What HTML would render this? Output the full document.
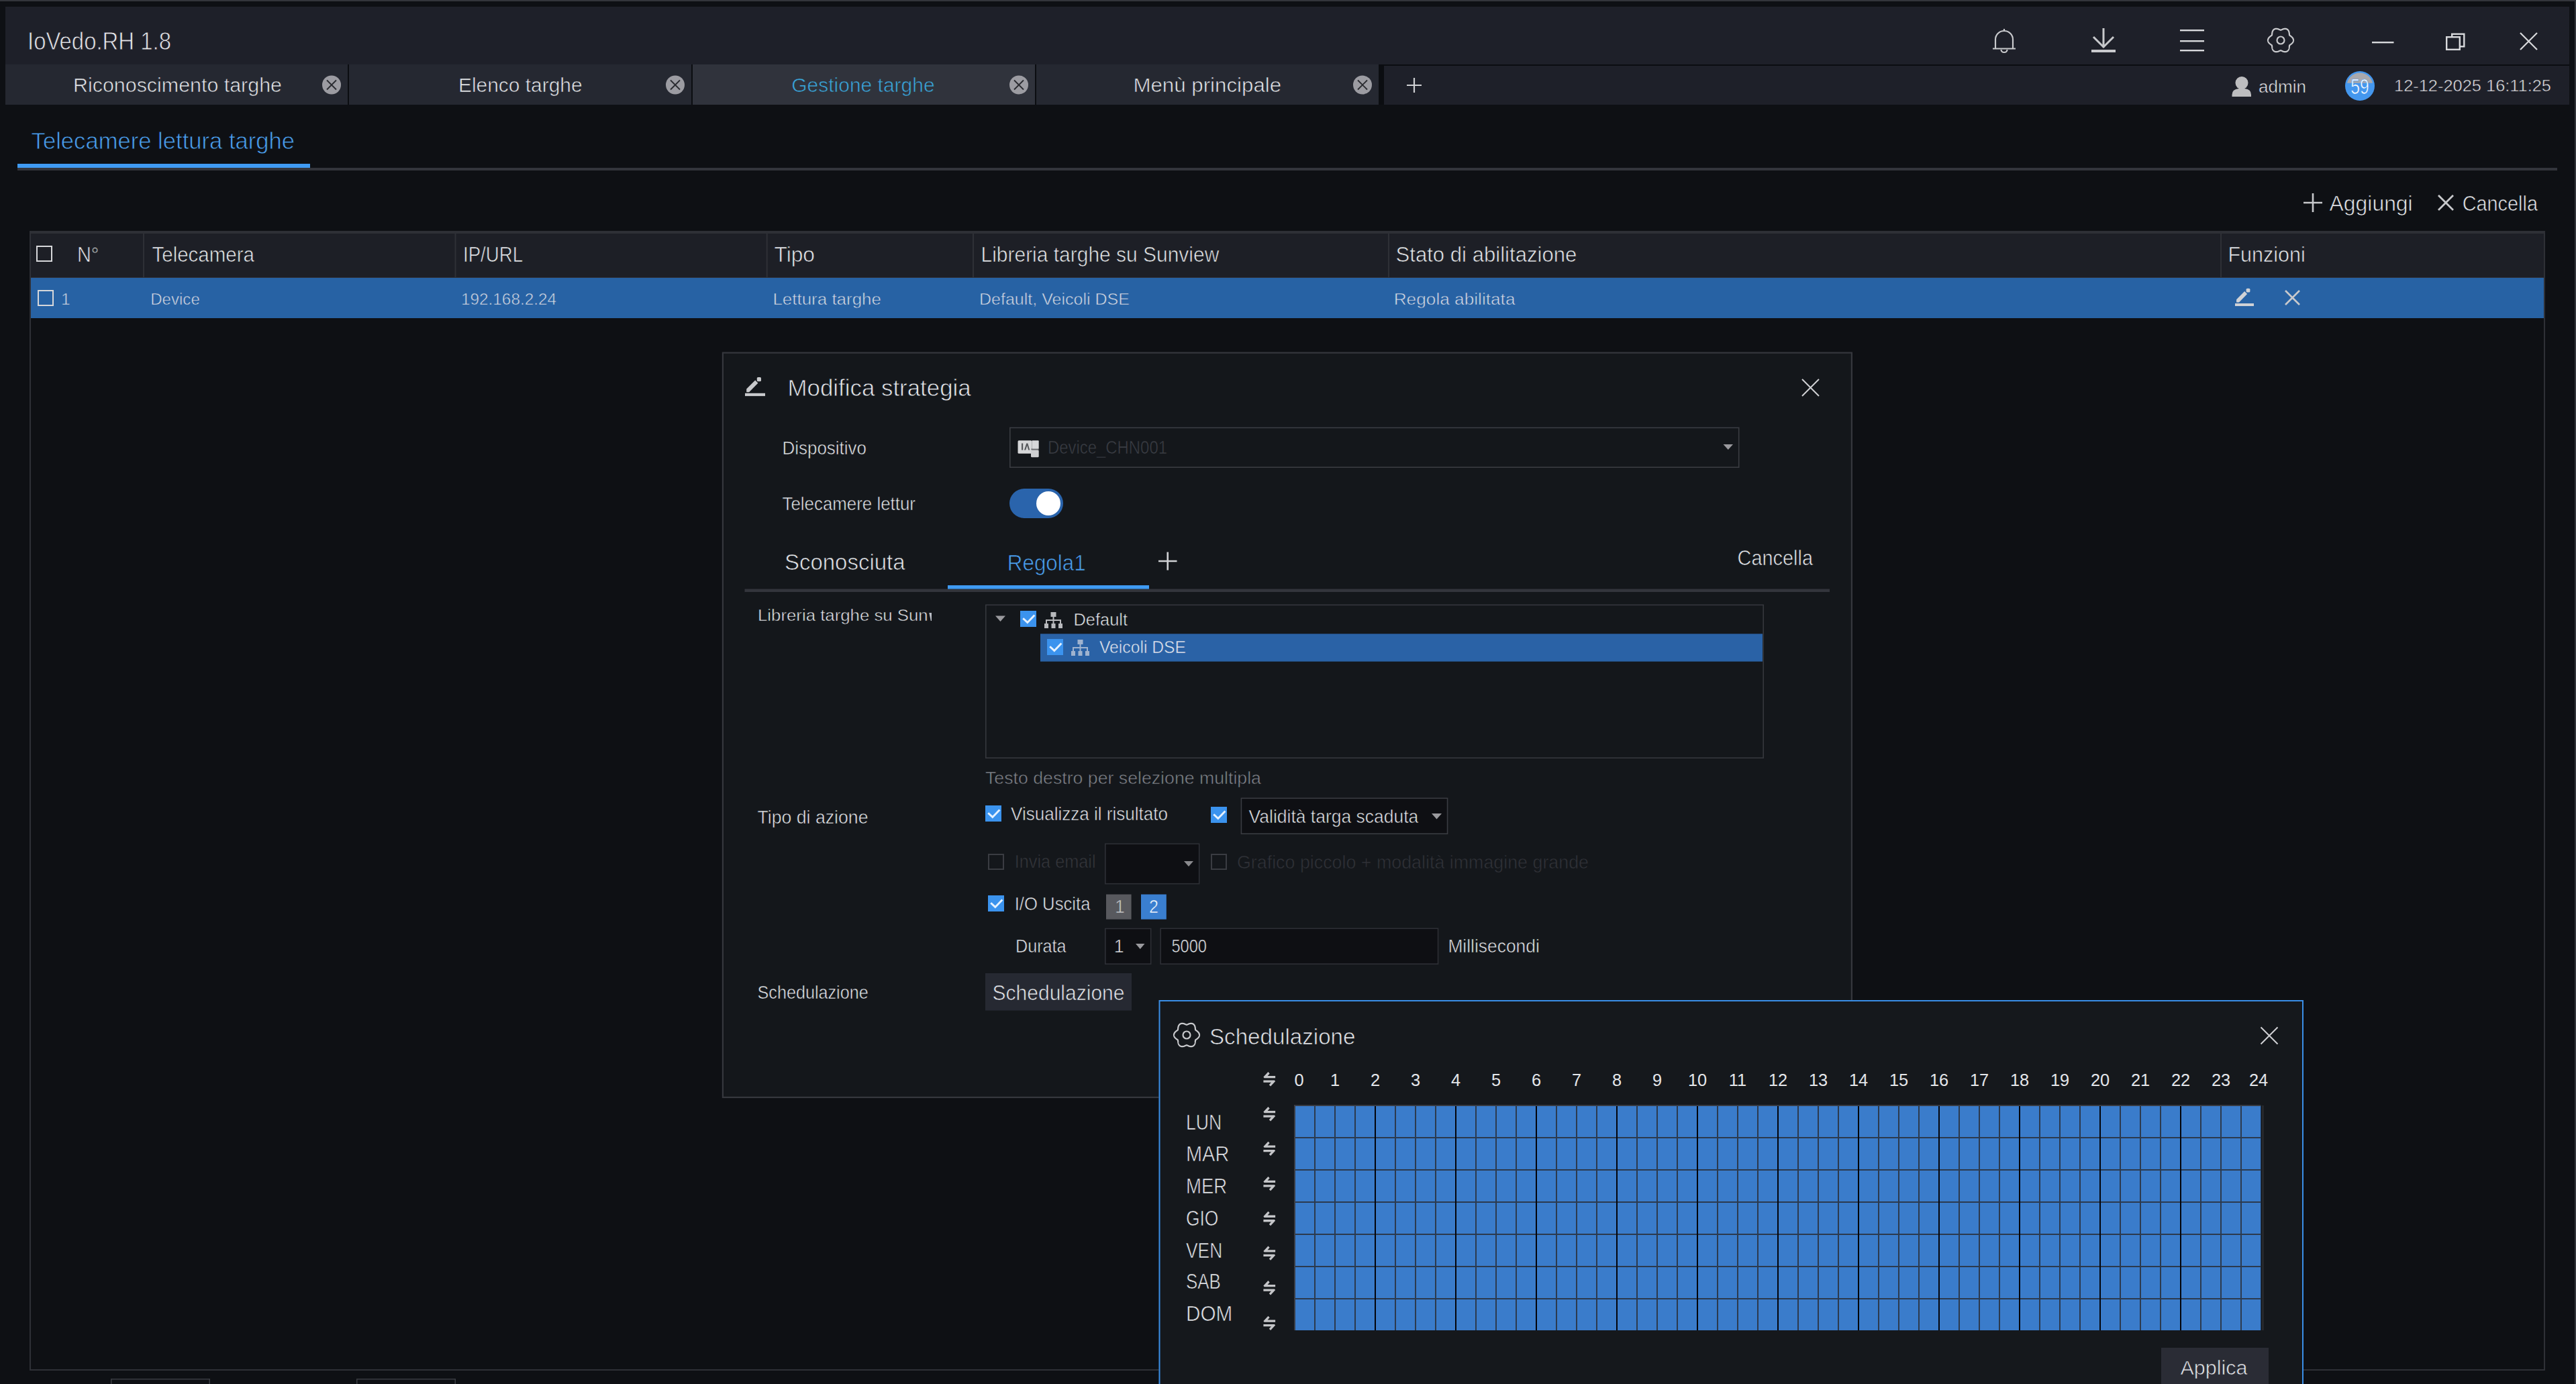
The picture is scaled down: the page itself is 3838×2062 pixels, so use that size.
<!DOCTYPE html>
<html><head><meta charset="utf-8"><title>IoVedo.RH</title>
<style>
html,body{margin:0;padding:0;background:#0e1014;overflow:hidden;}
svg{display:block;}
text{font-family:"Liberation Sans",sans-serif;white-space:pre;}
</style></head><body>
<svg width="3838" height="2062" viewBox="0 0 3838 2062">
<rect x="0.00" y="0.00" width="3838.00" height="2062.00" fill="#0e1014" />
<rect x="0.00" y="0.00" width="3838.00" height="2.00" fill="#33353b" />
<rect x="3836.00" y="0.00" width="2.00" height="2062.00" fill="#33353b" />
<rect x="8.00" y="10.00" width="3820.00" height="86.00" fill="#1e2029" />
<text x="41.00" y="74.00" font-size="36.66" fill="#e4e6ea" textLength="214.01" lengthAdjust="spacingAndGlyphs" stroke="#1e2029" stroke-width="0.81" >IoVedo.RH 1.8</text>
<path d="M2986 43 v3 M2973 72 v-13 a13 13 0 0 1 26 0 v13 M2969 72.5 h34 M2981.5 74 a4.5 4 0 0 0 9 0" fill="none" stroke="#c8c9cc" stroke-width="2.2" />
<path d="M3134 42 v29 M3119 55 l15 15 l15 -15" fill="none" stroke="#c8c9cc" stroke-width="3" />
<rect x="3116.00" y="74.00" width="36.00" height="4.00" fill="#c8c9cc" />
<rect x="3248.00" y="44.00" width="36.00" height="2.40" fill="#d8d9dc" />
<rect x="3248.00" y="60.00" width="36.00" height="2.40" fill="#d8d9dc" />
<rect x="3248.00" y="74.00" width="36.00" height="2.40" fill="#d8d9dc" />
<path d="M3417.00 60.00 L3416.99 60.33 L3416.96 60.66 L3416.91 60.99 L3416.84 61.32 L3416.75 61.64 L3416.64 61.96 L3416.51 62.27 L3416.37 62.58 L3416.21 62.88 L3416.03 63.18 L3415.84 63.47 L3415.63 63.75 L3415.41 64.02 L3415.18 64.28 L3414.94 64.54 L3414.69 64.79 L3414.44 65.03 L3414.17 65.26 L3413.91 65.48 L3413.64 65.69 L3413.36 65.90 L3413.09 66.10 L3412.82 66.29 L3412.56 66.48 L3412.29 66.67 L3412.04 66.85 L3411.80 67.03 L3411.56 67.21 L3411.35 67.40 L3411.16 67.60 L3411.08 67.86 L3411.03 68.14 L3410.99 68.43 L3410.95 68.74 L3410.92 69.05 L3410.89 69.37 L3410.86 69.69 L3410.83 70.02 L3410.79 70.36 L3410.75 70.70 L3410.70 71.04 L3410.64 71.38 L3410.57 71.72 L3410.49 72.06 L3410.40 72.40 L3410.30 72.74 L3410.19 73.07 L3410.06 73.39 L3409.92 73.71 L3409.77 74.02 L3409.60 74.33 L3409.42 74.62 L3409.22 74.90 L3409.02 75.16 L3408.79 75.42 L3408.56 75.66 L3408.31 75.88 L3408.05 76.09 L3407.78 76.28 L3407.50 76.45 L3407.21 76.61 L3406.91 76.75 L3406.60 76.87 L3406.28 76.97 L3405.95 77.06 L3405.62 77.12 L3405.29 77.17 L3404.95 77.20 L3404.61 77.21 L3404.26 77.20 L3403.92 77.18 L3403.57 77.14 L3403.22 77.09 L3402.88 77.02 L3402.54 76.94 L3402.20 76.85 L3401.87 76.75 L3401.54 76.63 L3401.21 76.51 L3400.89 76.39 L3400.57 76.26 L3400.27 76.12 L3399.96 75.98 L3399.67 75.85 L3399.37 75.71 L3399.09 75.58 L3398.81 75.46 L3398.54 75.35 L3398.27 75.26 L3398.00 75.20 L3397.73 75.26 L3397.46 75.35 L3397.19 75.46 L3396.91 75.58 L3396.63 75.71 L3396.33 75.85 L3396.04 75.98 L3395.73 76.12 L3395.43 76.26 L3395.11 76.39 L3394.79 76.51 L3394.46 76.63 L3394.13 76.75 L3393.80 76.85 L3393.46 76.94 L3393.12 77.02 L3392.78 77.09 L3392.43 77.14 L3392.08 77.18 L3391.74 77.20 L3391.39 77.21 L3391.05 77.20 L3390.71 77.17 L3390.38 77.12 L3390.05 77.06 L3389.72 76.97 L3389.40 76.87 L3389.09 76.75 L3388.79 76.61 L3388.50 76.45 L3388.22 76.28 L3387.95 76.09 L3387.69 75.88 L3387.44 75.66 L3387.21 75.42 L3386.98 75.16 L3386.78 74.90 L3386.58 74.62 L3386.40 74.33 L3386.23 74.02 L3386.08 73.71 L3385.94 73.39 L3385.81 73.07 L3385.70 72.74 L3385.60 72.40 L3385.51 72.06 L3385.43 71.72 L3385.36 71.38 L3385.30 71.04 L3385.25 70.70 L3385.21 70.36 L3385.17 70.02 L3385.14 69.69 L3385.11 69.37 L3385.08 69.05 L3385.05 68.74 L3385.01 68.43 L3384.97 68.14 L3384.92 67.86 L3384.84 67.60 L3384.65 67.40 L3384.44 67.21 L3384.20 67.03 L3383.96 66.85 L3383.71 66.67 L3383.44 66.48 L3383.18 66.29 L3382.91 66.10 L3382.64 65.90 L3382.36 65.69 L3382.09 65.48 L3381.83 65.26 L3381.56 65.03 L3381.31 64.79 L3381.06 64.54 L3380.82 64.28 L3380.59 64.02 L3380.37 63.75 L3380.16 63.47 L3379.97 63.18 L3379.79 62.88 L3379.63 62.58 L3379.49 62.27 L3379.36 61.96 L3379.25 61.64 L3379.16 61.32 L3379.09 60.99 L3379.04 60.66 L3379.01 60.33 L3379.00 60.00 L3379.01 59.67 L3379.04 59.34 L3379.09 59.01 L3379.16 58.68 L3379.25 58.36 L3379.36 58.04 L3379.49 57.73 L3379.63 57.42 L3379.79 57.12 L3379.97 56.82 L3380.16 56.53 L3380.37 56.25 L3380.59 55.98 L3380.82 55.72 L3381.06 55.46 L3381.31 55.21 L3381.56 54.97 L3381.83 54.74 L3382.09 54.52 L3382.36 54.31 L3382.64 54.10 L3382.91 53.90 L3383.18 53.71 L3383.44 53.52 L3383.71 53.33 L3383.96 53.15 L3384.20 52.97 L3384.44 52.79 L3384.65 52.60 L3384.84 52.40 L3384.92 52.14 L3384.97 51.86 L3385.01 51.57 L3385.05 51.26 L3385.08 50.95 L3385.11 50.63 L3385.14 50.31 L3385.17 49.98 L3385.21 49.64 L3385.25 49.30 L3385.30 48.96 L3385.36 48.62 L3385.43 48.28 L3385.51 47.94 L3385.60 47.60 L3385.70 47.26 L3385.81 46.93 L3385.94 46.61 L3386.08 46.29 L3386.23 45.98 L3386.40 45.67 L3386.58 45.38 L3386.78 45.10 L3386.98 44.84 L3387.21 44.58 L3387.44 44.34 L3387.69 44.12 L3387.95 43.91 L3388.22 43.72 L3388.50 43.55 L3388.79 43.39 L3389.09 43.25 L3389.40 43.13 L3389.72 43.03 L3390.05 42.94 L3390.38 42.88 L3390.71 42.83 L3391.05 42.80 L3391.39 42.79 L3391.74 42.80 L3392.08 42.82 L3392.43 42.86 L3392.78 42.91 L3393.12 42.98 L3393.46 43.06 L3393.80 43.15 L3394.13 43.25 L3394.46 43.37 L3394.79 43.49 L3395.11 43.61 L3395.43 43.74 L3395.73 43.88 L3396.04 44.02 L3396.33 44.15 L3396.63 44.29 L3396.91 44.42 L3397.19 44.54 L3397.46 44.65 L3397.73 44.74 L3398.00 44.80 L3398.27 44.74 L3398.54 44.65 L3398.81 44.54 L3399.09 44.42 L3399.37 44.29 L3399.67 44.15 L3399.96 44.02 L3400.27 43.88 L3400.57 43.74 L3400.89 43.61 L3401.21 43.49 L3401.54 43.37 L3401.87 43.25 L3402.20 43.15 L3402.54 43.06 L3402.88 42.98 L3403.22 42.91 L3403.57 42.86 L3403.92 42.82 L3404.26 42.80 L3404.61 42.79 L3404.95 42.80 L3405.29 42.83 L3405.62 42.88 L3405.95 42.94 L3406.28 43.03 L3406.60 43.13 L3406.91 43.25 L3407.21 43.39 L3407.50 43.55 L3407.78 43.72 L3408.05 43.91 L3408.31 44.12 L3408.56 44.34 L3408.79 44.58 L3409.02 44.84 L3409.22 45.10 L3409.42 45.38 L3409.60 45.67 L3409.77 45.98 L3409.92 46.29 L3410.06 46.61 L3410.19 46.93 L3410.30 47.26 L3410.40 47.60 L3410.49 47.94 L3410.57 48.28 L3410.64 48.62 L3410.70 48.96 L3410.75 49.30 L3410.79 49.64 L3410.83 49.98 L3410.86 50.31 L3410.89 50.63 L3410.92 50.95 L3410.95 51.26 L3410.99 51.57 L3411.03 51.86 L3411.08 52.14 L3411.16 52.40 L3411.35 52.60 L3411.56 52.79 L3411.80 52.97 L3412.04 53.15 L3412.29 53.33 L3412.56 53.52 L3412.82 53.71 L3413.09 53.90 L3413.36 54.10 L3413.64 54.31 L3413.91 54.52 L3414.17 54.74 L3414.44 54.97 L3414.69 55.21 L3414.94 55.46 L3415.18 55.72 L3415.41 55.98 L3415.63 56.25 L3415.84 56.53 L3416.03 56.82 L3416.21 57.12 L3416.37 57.42 L3416.51 57.73 L3416.64 58.04 L3416.75 58.36 L3416.84 58.68 L3416.91 59.01 L3416.96 59.34 L3416.99 59.67 Z" fill="none" stroke="#c8c9cc" stroke-width="2.2" />
<circle cx="3398" cy="60" r="5.5" fill="none" stroke="#c8c9cc" stroke-width="2.2"/>
<rect x="3534.00" y="62.00" width="32.50" height="2.40" fill="#d8d9dc" />
<rect x="3653.20" y="50.70" width="18.10" height="18.60" fill="none" stroke="#d8d9dc" stroke-width="2.4"/>
<rect x="3644.00" y="54.00" width="22.00" height="21.00" fill="#1e2029" />
<rect x="3645.20" y="55.20" width="19.60" height="18.60" fill="none" stroke="#d8d9dc" stroke-width="2.4"/>
<path d="M3755 49 L3780 74 M3780 49 L3755 74" fill="none" stroke="#d8d9dc" stroke-width="2.2" />
<rect x="8.00" y="96.00" width="3820.00" height="60.00" fill="#0b0d11" />
<rect x="8.00" y="96.00" width="510.00" height="60.00" fill="#252831" />
<circle cx="494" cy="126.5" r="14" fill="#9c9ca2"/>
<path d="M487 119.5 L501 133.5 M501 119.5 L487 133.5" fill="none" stroke="#2a2b30" stroke-width="1.9" />
<rect x="520.00" y="96.00" width="510.00" height="60.00" fill="#252831" />
<circle cx="1006" cy="126.5" r="14" fill="#9c9ca2"/>
<path d="M999 119.5 L1013 133.5 M1013 119.5 L999 133.5" fill="none" stroke="#2a2b30" stroke-width="1.9" />
<rect x="1032.00" y="96.00" width="510.00" height="60.00" fill="#30333c" />
<circle cx="1518" cy="126.5" r="14" fill="#9c9ca2"/>
<path d="M1511 119.5 L1525 133.5 M1525 119.5 L1511 133.5" fill="none" stroke="#2a2b30" stroke-width="1.9" />
<rect x="1544.00" y="96.00" width="510.00" height="60.00" fill="#252831" />
<circle cx="2030" cy="126.5" r="14" fill="#9c9ca2"/>
<path d="M2023 119.5 L2037 133.5 M2037 119.5 L2023 133.5" fill="none" stroke="#2a2b30" stroke-width="1.9" />
<text x="109.00" y="137.00" font-size="29.61" fill="#e4e6ea" textLength="310.99" lengthAdjust="spacingAndGlyphs" stroke="#252831" stroke-width="0.65" >Riconoscimento targhe</text>
<text x="683.00" y="137.00" font-size="29.61" fill="#e4e6ea" textLength="184.60" lengthAdjust="spacingAndGlyphs" stroke="#252831" stroke-width="0.65" >Elenco targhe</text>
<text x="1179.30" y="137.00" font-size="29.61" fill="#3aa6dc" textLength="213.29" lengthAdjust="spacingAndGlyphs" stroke="#30333c" stroke-width="0.65" >Gestione targhe</text>
<text x="1688.40" y="137.00" font-size="29.61" fill="#e4e6ea" textLength="220.79" lengthAdjust="spacingAndGlyphs" stroke="#252831" stroke-width="0.65" >Menù principale</text>
<rect x="2062.00" y="98.00" width="1766.00" height="58.00" fill="#1e2029" />
<path d="M2096 127 h22 M2107 116 v22" fill="none" stroke="#d0d1d4" stroke-width="2.2" />
<circle cx="3340" cy="123.5" r="9.5" fill="#bdbdbf"/>
<path d="M3325.5 144 v-3 q0 -8 10 -9 h9 q9.5 1 9.5 9 v3 z" fill="#bdbdbf"  />
<text x="3365.00" y="138.00" font-size="25.38" fill="#e4e6ea" textLength="70.99" lengthAdjust="spacingAndGlyphs" stroke="#1e2029" stroke-width="0.56" >admin</text>
<circle cx="3516" cy="128" r="22" fill="#4497ee"/>
<clipPath id="bc"><rect x="3490" y="100" width="60" height="23.8"/></clipPath>
<circle cx="3516" cy="128" r="19.5" fill="#a9a9ad" clip-path="url(#bc)"/>
<text x="3502.30" y="139.70" font-size="30.60" fill="#ffffff" textLength="27.41" lengthAdjust="spacingAndGlyphs" stroke="#4497ee" stroke-width="0.67" >59</text>
<text x="3567.00" y="135.50" font-size="24.67" fill="#e4e6ea" textLength="234.01" lengthAdjust="spacingAndGlyphs" stroke="#1e2029" stroke-width="0.54" >12-12-2025 16:11:25</text>
<text x="46.60" y="221.50" font-size="35.25" fill="#4a9ff0" textLength="392.41" lengthAdjust="spacingAndGlyphs" stroke="#0e1014" stroke-width="0.78" >Telecamere lettura targhe</text>
<rect x="26.00" y="250.00" width="3784.00" height="4.00" fill="#33353c" />
<rect x="26.00" y="244.00" width="436.00" height="6.00" fill="#3f9af2" />
<path d="M3432 302 h28 M3446 288 v28" fill="none" stroke="#c8c9cc" stroke-width="2.6" />
<text x="3470.60" y="314.00" font-size="31.02" fill="#e4e6ea" textLength="124.10" lengthAdjust="spacingAndGlyphs" stroke="#0e1014" stroke-width="0.68" >Aggiungi</text>
<path d="M3633 291 L3655 313 M3655 291 L3633 313" fill="none" stroke="#c8c9cc" stroke-width="2.8" />
<text x="3668.70" y="314.00" font-size="31.02" fill="#e4e6ea" textLength="112.28" lengthAdjust="spacingAndGlyphs" stroke="#0e1014" stroke-width="0.68" >Cancella</text>
<rect x="45.00" y="345.00" width="3746.00" height="1696.00" fill="none" stroke="#2e3036" stroke-width="2"/>
<rect x="44.00" y="344.00" width="3748.00" height="4.00" fill="#2e3036" />
<rect x="46.00" y="348.00" width="3744.00" height="65.00" fill="#1d1f26" />
<rect x="46.00" y="413.00" width="3744.00" height="1.50" fill="#2e3036" />
<rect x="213.00" y="348.00" width="2.00" height="65.00" fill="#2e3036" />
<rect x="677.50" y="348.00" width="2.00" height="65.00" fill="#2e3036" />
<rect x="1141.70" y="348.00" width="2.00" height="65.00" fill="#2e3036" />
<rect x="1449.00" y="348.00" width="2.00" height="65.00" fill="#2e3036" />
<rect x="2068.00" y="348.00" width="2.00" height="65.00" fill="#2e3036" />
<rect x="3308.00" y="348.00" width="2.00" height="65.00" fill="#2e3036" />
<rect x="55.00" y="367.00" width="22.00" height="22.00" fill="none" stroke="#d6d7da" stroke-width="2"/>
<text x="115.00" y="389.50" font-size="31.02" fill="#e4e6ea" textLength="32.40" lengthAdjust="spacingAndGlyphs" stroke="#1d1f26" stroke-width="0.68" >N°</text>
<text x="226.50" y="389.50" font-size="31.02" fill="#e4e6ea" textLength="152.47" lengthAdjust="spacingAndGlyphs" stroke="#1d1f26" stroke-width="0.68" >Telecamera</text>
<text x="690.00" y="389.50" font-size="31.02" fill="#e4e6ea" textLength="89.00" lengthAdjust="spacingAndGlyphs" stroke="#1d1f26" stroke-width="0.68" >IP/URL</text>
<text x="1153.50" y="389.50" font-size="31.02" fill="#e4e6ea" textLength="60.51" lengthAdjust="spacingAndGlyphs" stroke="#1d1f26" stroke-width="0.68" >Tipo</text>
<text x="1461.50" y="389.50" font-size="31.02" fill="#e4e6ea" textLength="354.81" lengthAdjust="spacingAndGlyphs" stroke="#1d1f26" stroke-width="0.68" >Libreria targhe su Sunview</text>
<text x="2079.50" y="389.50" font-size="31.02" fill="#e4e6ea" textLength="269.81" lengthAdjust="spacingAndGlyphs" stroke="#1d1f26" stroke-width="0.68" >Stato di abilitazione</text>
<text x="3319.40" y="389.50" font-size="31.02" fill="#e4e6ea" textLength="115.39" lengthAdjust="spacingAndGlyphs" stroke="#1d1f26" stroke-width="0.68" >Funzioni</text>
<rect x="46.00" y="414.00" width="3744.00" height="60.00" fill="#2762a4" />
<rect x="57.00" y="433.00" width="22.00" height="22.00" fill="none" stroke="#d6d7da" stroke-width="2"/>
<text x="91.00" y="454.00" font-size="24.67" fill="#d2d8e2" textLength="13.72" lengthAdjust="spacingAndGlyphs" stroke="#2762a4" stroke-width="0.54" >1</text>
<text x="224.20" y="454.00" font-size="24.67" fill="#d2d8e2" textLength="73.59" lengthAdjust="spacingAndGlyphs" stroke="#2762a4" stroke-width="0.54" >Device</text>
<text x="687.00" y="454.00" font-size="24.67" fill="#d2d8e2" textLength="142.00" lengthAdjust="spacingAndGlyphs" stroke="#2762a4" stroke-width="0.54" >192.168.2.24</text>
<text x="1151.40" y="454.00" font-size="24.67" fill="#d2d8e2" textLength="161.59" lengthAdjust="spacingAndGlyphs" stroke="#2762a4" stroke-width="0.54" >Lettura targhe</text>
<text x="1459.00" y="454.00" font-size="24.67" fill="#d2d8e2" textLength="223.99" lengthAdjust="spacingAndGlyphs" stroke="#2762a4" stroke-width="0.54" >Default, Veicoli DSE</text>
<text x="2076.70" y="454.00" font-size="24.67" fill="#d2d8e2" textLength="180.79" lengthAdjust="spacingAndGlyphs" stroke="#2762a4" stroke-width="0.54" >Regola abilitata</text>
<path d="M3332.05 446.23 L3344.19 434.09 L3348.11 438.01 L3336.16 450.15 L3335.60 450.52 L3332.05 450.52 Z" fill="#d0d2d6"  />
<rect x="3346.61" y="429.80" width="5.79" height="5.79" fill="#d0d2d6" rx="1.5"/>
<rect x="3330.00" y="452.01" width="28.00" height="4.01" fill="#d0d2d6" />
<path d="M3405 433 L3426 454 M3426 433 L3405 454" fill="none" stroke="#c8c9cc" stroke-width="2.6" />
<rect x="165.75" y="2054.75" width="146.50" height="14.50" fill="none" stroke="#3a3c42" stroke-width="1.5"/>
<rect x="531.75" y="2054.75" width="146.50" height="14.50" fill="none" stroke="#3a3c42" stroke-width="1.5"/>
<rect x="1075.80" y="524.50" width="1684.20" height="1111.50" fill="#14171b" />
<rect x="1076.90" y="525.60" width="1682.00" height="1109.30" fill="none" stroke="#35373d" stroke-width="2.2"/>
<path d="M1112.20 579.60 L1125.20 566.60 L1129.40 570.80 L1116.60 583.80 L1116.00 584.20 L1112.20 584.20 Z" fill="#c8c9cc"  />
<rect x="1127.80" y="562.00" width="6.20" height="6.20" fill="#c8c9cc" rx="1.5"/>
<rect x="1110.00" y="585.80" width="30.00" height="4.30" fill="#c8c9cc" />
<text x="1173.60" y="589.70" font-size="34.54" fill="#e4e6ea" textLength="273.06" lengthAdjust="spacingAndGlyphs" stroke="#14171b" stroke-width="0.76" >Modifica strategia</text>
<path d="M2685 565 L2710 590 M2710 565 L2685 590" fill="none" stroke="#d0d1d4" stroke-width="2" />
<text x="1165.50" y="676.60" font-size="26.79" fill="#e4e6ea" textLength="125.50" lengthAdjust="spacingAndGlyphs" stroke="#14171b" stroke-width="0.59" >Dispositivo</text>
<rect x="1504.80" y="637.30" width="1085.90" height="58.90" fill="none" stroke="#3a3c42" stroke-width="1.6"/>
<rect x="1516.50" y="656.30" width="20.80" height="19.50" fill="#d6d7d9" rx="1.5"/>
<rect x="1537.30" y="656.30" width="10.40" height="12.70" fill="#d6d7d9" rx="1"/>
<rect x="1536.00" y="670.30" width="11.70" height="11.00" fill="#cfd0d2" rx="1.5"/>
<rect x="1536.30" y="668.60" width="11.40" height="1.60" fill="#6a6b6e" />
<rect x="1522.00" y="660.50" width="2.20" height="10.00" fill="#55575b" />
<path d="M1526 670.5 L1529.3 660.5 L1531.3 660.5 L1534.3 670.5 L1532.2 670.5 L1530.3 664 L1528.2 670.5 Z" fill="#55575b"  />
<text x="1561.00" y="676.00" font-size="26.79" fill="#3b3e45" textLength="178.00" lengthAdjust="spacingAndGlyphs" stroke="#14171b" stroke-width="0.59" >Device_CHN001</text>
<path d="M2567.5 662 h14.5 l-7.25 8 z" fill="#9a9a9e"  />
<text x="1165.50" y="759.50" font-size="26.79" fill="#e4e6ea" textLength="198.50" lengthAdjust="spacingAndGlyphs" stroke="#14171b" stroke-width="0.59" >Telecamere lettur</text>
<rect x="1504" y="728" width="80" height="44" rx="22" fill="#2a64ac"/>
<circle cx="1562" cy="750" r="18" fill="#ffffff"/>
<text x="1169.00" y="849.20" font-size="33.84" fill="#e4e6ea" textLength="179.56" lengthAdjust="spacingAndGlyphs" stroke="#14171b" stroke-width="0.74" >Sconosciuta</text>
<text x="1500.80" y="849.60" font-size="33.84" fill="#4a9ff0" textLength="116.90" lengthAdjust="spacingAndGlyphs" stroke="#14171b" stroke-width="0.74" >Regola1</text>
<path d="M1726 836 h27.5 M1739.75 822.5 v27" fill="none" stroke="#d0d1d4" stroke-width="2.6" />
<text x="2588.50" y="842.00" font-size="31.02" fill="#e4e6ea" textLength="112.48" lengthAdjust="spacingAndGlyphs" stroke="#14171b" stroke-width="0.68" >Cancella</text>
<rect x="1109.50" y="877.50" width="1616.50" height="4.50" fill="#33353c" />
<rect x="1412.00" y="872.00" width="300.00" height="5.50" fill="#3f9af2" />
<text x="1129.00" y="925.00" font-size="24.82" fill="#e4e6ea" textLength="253.71" lengthAdjust="spacingAndGlyphs" stroke="#14171b" stroke-width="0.55" >Libreria targhe su Sun</text>
<path d="M1384.3 913 L1386.8 925 L1388 925 L1388 913 Z" fill="#b8bcc4"  />
<rect x="1468.80" y="901.30" width="1158.40" height="227.90" fill="none" stroke="#35373d" stroke-width="1.6"/>
<path d="M1483 917.5 h15 l-7.5 8.5 z" fill="#9a9a9e"  />
<rect x="1520.00" y="910.00" width="24.00" height="24.00" fill="#3b93ee" />
<path d="M1524.2 921.2 L1530.8 927.4 L1541.4 916.6" fill="none" stroke="#e6f2ff" stroke-width="2.9" />
<rect x="1565.50" y="912.00" width="8.00" height="7.00" fill="#b8b9bc" />
<rect x="1568.50" y="919.00" width="2.00" height="5.00" fill="#b8b9bc" />
<rect x="1558.00" y="923.00" width="23.00" height="2.00" fill="#b8b9bc" />
<rect x="1558.00" y="924.00" width="2.00" height="5.00" fill="#b8b9bc" />
<rect x="1568.50" y="924.00" width="2.00" height="5.00" fill="#b8b9bc" />
<rect x="1579.00" y="924.00" width="2.00" height="5.00" fill="#b8b9bc" />
<rect x="1556.00" y="929.00" width="6.00" height="7.00" fill="#b8b9bc" />
<rect x="1566.50" y="929.00" width="6.00" height="7.00" fill="#b8b9bc" />
<rect x="1577.00" y="929.00" width="6.00" height="7.00" fill="#b8b9bc" />
<text x="1599.50" y="931.80" font-size="25.38" fill="#e4e6ea" textLength="80.51" lengthAdjust="spacingAndGlyphs" stroke="#14171b" stroke-width="0.56" >Default</text>
<rect x="1550.00" y="944.30" width="1076.00" height="41.30" fill="#2a62a6" />
<rect x="1560.00" y="952.00" width="24.00" height="24.00" fill="#3b93ee" />
<path d="M1564.2 963.2 L1570.8 969.4 L1581.4 958.6" fill="none" stroke="#e6f2ff" stroke-width="2.9" />
<rect x="1605.50" y="953.00" width="8.00" height="7.00" fill="#9fb3cf" />
<rect x="1608.50" y="960.00" width="2.00" height="5.00" fill="#9fb3cf" />
<rect x="1598.00" y="964.00" width="23.00" height="2.00" fill="#9fb3cf" />
<rect x="1598.00" y="965.00" width="2.00" height="5.00" fill="#9fb3cf" />
<rect x="1608.50" y="965.00" width="2.00" height="5.00" fill="#9fb3cf" />
<rect x="1619.00" y="965.00" width="2.00" height="5.00" fill="#9fb3cf" />
<rect x="1596.00" y="970.00" width="6.00" height="7.00" fill="#9fb3cf" />
<rect x="1606.50" y="970.00" width="6.00" height="7.00" fill="#9fb3cf" />
<rect x="1617.00" y="970.00" width="6.00" height="7.00" fill="#9fb3cf" />
<text x="1638.00" y="973.40" font-size="25.38" fill="#e8ecf2" textLength="128.99" lengthAdjust="spacingAndGlyphs" stroke="#2a62a6" stroke-width="0.56" >Veicoli DSE</text>
<text x="1468.00" y="1168.00" font-size="25.38" fill="#80838a" textLength="410.97" lengthAdjust="spacingAndGlyphs" stroke="#14171b" stroke-width="0.56" >Testo destro per selezione multipla</text>
<text x="1128.50" y="1226.50" font-size="26.79" fill="#e4e6ea" textLength="165.00" lengthAdjust="spacingAndGlyphs" stroke="#14171b" stroke-width="0.59" >Tipo di azione</text>
<rect x="1468.00" y="1200.00" width="24.00" height="24.00" fill="#3b93ee" />
<path d="M1472.2 1211.2 L1478.8 1217.4 L1489.4 1206.6" fill="none" stroke="#e6f2ff" stroke-width="2.9" />
<text x="1506.00" y="1222.40" font-size="26.79" fill="#e4e6ea" textLength="234.01" lengthAdjust="spacingAndGlyphs" stroke="#14171b" stroke-width="0.59" >Visualizza il risultato</text>
<rect x="1804.00" y="1202.00" width="24.00" height="24.00" fill="#3b93ee" />
<path d="M1808.2 1213.2 L1814.8 1219.4 L1825.4 1208.6" fill="none" stroke="#e6f2ff" stroke-width="2.9" />
<rect x="1848.60" y="1188.50" width="308.80" height="54.50" fill="#0e0f13" />
<rect x="1849.40" y="1189.30" width="307.20" height="52.90" fill="none" stroke="#3a3c42" stroke-width="1.6"/>
<text x="1860.60" y="1225.80" font-size="26.79" fill="#e4e6ea" textLength="252.67" lengthAdjust="spacingAndGlyphs" stroke="#0e0f13" stroke-width="0.59" >Validità targa scaduta</text>
<path d="M2133 1212 h15 l-7.5 8.5 z" fill="#9a9a9e"  />
<rect x="1473.00" y="1273.00" width="22.00" height="22.00" fill="none" stroke="#3a3c42" stroke-width="2"/>
<text x="1511.70" y="1293.00" font-size="26.79" fill="#34363c" textLength="120.90" lengthAdjust="spacingAndGlyphs" stroke="#14171b" stroke-width="0.59" >Invia email</text>
<rect x="1646.00" y="1256.40" width="141.50" height="61.10" fill="#0e0f13" />
<rect x="1646.80" y="1257.20" width="139.90" height="59.50" fill="none" stroke="#2e3036" stroke-width="1.6"/>
<path d="M1764 1283 h14 l-7 8 z" fill="#8a8a8e"  />
<rect x="1805.00" y="1273.00" width="22.00" height="22.00" fill="none" stroke="#3a3c42" stroke-width="2"/>
<text x="1843.00" y="1294.00" font-size="26.79" fill="#303238" textLength="523.99" lengthAdjust="spacingAndGlyphs" stroke="#14171b" stroke-width="0.59" >Grafico piccolo + modalità immagine grande</text>
<rect x="1472.00" y="1334.00" width="24.00" height="24.00" fill="#3b93ee" />
<path d="M1476.2 1345.2 L1482.8 1351.4 L1493.4 1340.6" fill="none" stroke="#e6f2ff" stroke-width="2.9" />
<text x="1511.70" y="1355.50" font-size="26.79" fill="#e4e6ea" textLength="112.79" lengthAdjust="spacingAndGlyphs" stroke="#14171b" stroke-width="0.59" >I/O Uscita</text>
<rect x="1648.00" y="1332.50" width="37.60" height="37.20" fill="#58595e" />
<text x="1661.00" y="1360.00" font-size="26.79" fill="#c8c9cc" textLength="14.90" lengthAdjust="spacingAndGlyphs" stroke="#58595e" stroke-width="0.59" >1</text>
<rect x="1700.00" y="1332.50" width="37.80" height="37.20" fill="#3a7fd0" />
<text x="1712.00" y="1360.00" font-size="26.79" fill="#ffffff" textLength="14.00" lengthAdjust="spacingAndGlyphs" stroke="#3a7fd0" stroke-width="0.59" >2</text>
<text x="1513.00" y="1419.40" font-size="26.79" fill="#e4e6ea" textLength="75.59" lengthAdjust="spacingAndGlyphs" stroke="#14171b" stroke-width="0.59" >Durata</text>
<rect x="1646.00" y="1382.70" width="69.50" height="54.30" fill="#0e0f13" />
<rect x="1646.80" y="1383.50" width="67.90" height="52.70" fill="none" stroke="#2e3036" stroke-width="1.6"/>
<text x="1659.80" y="1419.40" font-size="26.79" fill="#e4e6ea" textLength="14.90" lengthAdjust="spacingAndGlyphs" stroke="#0e0f13" stroke-width="0.59" >1</text>
<path d="M1692 1406 h13.5 l-6.75 8 z" fill="#9a9a9e"  />
<rect x="1728.30" y="1382.50" width="415.10" height="54.50" fill="#0e0f13" />
<rect x="1729.10" y="1383.30" width="413.50" height="52.90" fill="none" stroke="#2e3036" stroke-width="1.6"/>
<text x="1745.40" y="1419.40" font-size="26.79" fill="#e4e6ea" textLength="52.59" lengthAdjust="spacingAndGlyphs" stroke="#0e0f13" stroke-width="0.59" >5000</text>
<text x="2157.40" y="1419.00" font-size="26.79" fill="#e4e6ea" textLength="136.39" lengthAdjust="spacingAndGlyphs" stroke="#14171b" stroke-width="0.59" >Millisecondi</text>
<text x="1128.50" y="1488.00" font-size="26.79" fill="#e4e6ea" textLength="165.19" lengthAdjust="spacingAndGlyphs" stroke="#14171b" stroke-width="0.59" >Schedulazione</text>
<rect x="1468.00" y="1450.00" width="218.00" height="55.60" fill="#262932" />
<text x="1478.50" y="1490.00" font-size="30.46" fill="#e4e6ea" textLength="196.99" lengthAdjust="spacingAndGlyphs" stroke="#262932" stroke-width="0.67" >Schedulazione</text>
<rect x="1726.50" y="1490.00" width="1705.50" height="590.00" fill="#15181c" />
<rect x="1727.50" y="1491.00" width="1703.50" height="588.00" fill="none" stroke="#3a8ee6" stroke-width="2"/>
<path d="M1787.00 1542.00 L1786.99 1542.33 L1786.96 1542.66 L1786.91 1542.99 L1786.84 1543.32 L1786.75 1543.64 L1786.64 1543.96 L1786.51 1544.27 L1786.37 1544.58 L1786.21 1544.88 L1786.03 1545.18 L1785.84 1545.47 L1785.63 1545.75 L1785.41 1546.02 L1785.18 1546.28 L1784.94 1546.54 L1784.69 1546.79 L1784.44 1547.03 L1784.17 1547.26 L1783.91 1547.48 L1783.64 1547.69 L1783.36 1547.90 L1783.09 1548.10 L1782.82 1548.29 L1782.56 1548.48 L1782.29 1548.67 L1782.04 1548.85 L1781.80 1549.03 L1781.56 1549.21 L1781.35 1549.40 L1781.16 1549.60 L1781.08 1549.86 L1781.03 1550.14 L1780.99 1550.43 L1780.95 1550.74 L1780.92 1551.05 L1780.89 1551.37 L1780.86 1551.69 L1780.83 1552.02 L1780.79 1552.36 L1780.75 1552.70 L1780.70 1553.04 L1780.64 1553.38 L1780.57 1553.72 L1780.49 1554.06 L1780.40 1554.40 L1780.30 1554.74 L1780.19 1555.07 L1780.06 1555.39 L1779.92 1555.71 L1779.77 1556.02 L1779.60 1556.33 L1779.42 1556.62 L1779.22 1556.90 L1779.02 1557.16 L1778.79 1557.42 L1778.56 1557.66 L1778.31 1557.88 L1778.05 1558.09 L1777.78 1558.28 L1777.50 1558.45 L1777.21 1558.61 L1776.91 1558.75 L1776.60 1558.87 L1776.28 1558.97 L1775.95 1559.06 L1775.62 1559.12 L1775.29 1559.17 L1774.95 1559.20 L1774.61 1559.21 L1774.26 1559.20 L1773.92 1559.18 L1773.57 1559.14 L1773.22 1559.09 L1772.88 1559.02 L1772.54 1558.94 L1772.20 1558.85 L1771.87 1558.75 L1771.54 1558.63 L1771.21 1558.51 L1770.89 1558.39 L1770.57 1558.26 L1770.27 1558.12 L1769.96 1557.98 L1769.67 1557.85 L1769.37 1557.71 L1769.09 1557.58 L1768.81 1557.46 L1768.54 1557.35 L1768.27 1557.26 L1768.00 1557.20 L1767.73 1557.26 L1767.46 1557.35 L1767.19 1557.46 L1766.91 1557.58 L1766.63 1557.71 L1766.33 1557.85 L1766.04 1557.98 L1765.73 1558.12 L1765.43 1558.26 L1765.11 1558.39 L1764.79 1558.51 L1764.46 1558.63 L1764.13 1558.75 L1763.80 1558.85 L1763.46 1558.94 L1763.12 1559.02 L1762.78 1559.09 L1762.43 1559.14 L1762.08 1559.18 L1761.74 1559.20 L1761.39 1559.21 L1761.05 1559.20 L1760.71 1559.17 L1760.38 1559.12 L1760.05 1559.06 L1759.72 1558.97 L1759.40 1558.87 L1759.09 1558.75 L1758.79 1558.61 L1758.50 1558.45 L1758.22 1558.28 L1757.95 1558.09 L1757.69 1557.88 L1757.44 1557.66 L1757.21 1557.42 L1756.98 1557.16 L1756.78 1556.90 L1756.58 1556.62 L1756.40 1556.33 L1756.23 1556.02 L1756.08 1555.71 L1755.94 1555.39 L1755.81 1555.07 L1755.70 1554.74 L1755.60 1554.40 L1755.51 1554.06 L1755.43 1553.72 L1755.36 1553.38 L1755.30 1553.04 L1755.25 1552.70 L1755.21 1552.36 L1755.17 1552.02 L1755.14 1551.69 L1755.11 1551.37 L1755.08 1551.05 L1755.05 1550.74 L1755.01 1550.43 L1754.97 1550.14 L1754.92 1549.86 L1754.84 1549.60 L1754.65 1549.40 L1754.44 1549.21 L1754.20 1549.03 L1753.96 1548.85 L1753.71 1548.67 L1753.44 1548.48 L1753.18 1548.29 L1752.91 1548.10 L1752.64 1547.90 L1752.36 1547.69 L1752.09 1547.48 L1751.83 1547.26 L1751.56 1547.03 L1751.31 1546.79 L1751.06 1546.54 L1750.82 1546.28 L1750.59 1546.02 L1750.37 1545.75 L1750.16 1545.47 L1749.97 1545.18 L1749.79 1544.88 L1749.63 1544.58 L1749.49 1544.27 L1749.36 1543.96 L1749.25 1543.64 L1749.16 1543.32 L1749.09 1542.99 L1749.04 1542.66 L1749.01 1542.33 L1749.00 1542.00 L1749.01 1541.67 L1749.04 1541.34 L1749.09 1541.01 L1749.16 1540.68 L1749.25 1540.36 L1749.36 1540.04 L1749.49 1539.73 L1749.63 1539.42 L1749.79 1539.12 L1749.97 1538.82 L1750.16 1538.53 L1750.37 1538.25 L1750.59 1537.98 L1750.82 1537.72 L1751.06 1537.46 L1751.31 1537.21 L1751.56 1536.97 L1751.83 1536.74 L1752.09 1536.52 L1752.36 1536.31 L1752.64 1536.10 L1752.91 1535.90 L1753.18 1535.71 L1753.44 1535.52 L1753.71 1535.33 L1753.96 1535.15 L1754.20 1534.97 L1754.44 1534.79 L1754.65 1534.60 L1754.84 1534.40 L1754.92 1534.14 L1754.97 1533.86 L1755.01 1533.57 L1755.05 1533.26 L1755.08 1532.95 L1755.11 1532.63 L1755.14 1532.31 L1755.17 1531.98 L1755.21 1531.64 L1755.25 1531.30 L1755.30 1530.96 L1755.36 1530.62 L1755.43 1530.28 L1755.51 1529.94 L1755.60 1529.60 L1755.70 1529.26 L1755.81 1528.93 L1755.94 1528.61 L1756.08 1528.29 L1756.23 1527.98 L1756.40 1527.67 L1756.58 1527.38 L1756.78 1527.10 L1756.98 1526.84 L1757.21 1526.58 L1757.44 1526.34 L1757.69 1526.12 L1757.95 1525.91 L1758.22 1525.72 L1758.50 1525.55 L1758.79 1525.39 L1759.09 1525.25 L1759.40 1525.13 L1759.72 1525.03 L1760.05 1524.94 L1760.38 1524.88 L1760.71 1524.83 L1761.05 1524.80 L1761.39 1524.79 L1761.74 1524.80 L1762.08 1524.82 L1762.43 1524.86 L1762.78 1524.91 L1763.12 1524.98 L1763.46 1525.06 L1763.80 1525.15 L1764.13 1525.25 L1764.46 1525.37 L1764.79 1525.49 L1765.11 1525.61 L1765.43 1525.74 L1765.73 1525.88 L1766.04 1526.02 L1766.33 1526.15 L1766.63 1526.29 L1766.91 1526.42 L1767.19 1526.54 L1767.46 1526.65 L1767.73 1526.74 L1768.00 1526.80 L1768.27 1526.74 L1768.54 1526.65 L1768.81 1526.54 L1769.09 1526.42 L1769.37 1526.29 L1769.67 1526.15 L1769.96 1526.02 L1770.27 1525.88 L1770.57 1525.74 L1770.89 1525.61 L1771.21 1525.49 L1771.54 1525.37 L1771.87 1525.25 L1772.20 1525.15 L1772.54 1525.06 L1772.88 1524.98 L1773.22 1524.91 L1773.57 1524.86 L1773.92 1524.82 L1774.26 1524.80 L1774.61 1524.79 L1774.95 1524.80 L1775.29 1524.83 L1775.62 1524.88 L1775.95 1524.94 L1776.28 1525.03 L1776.60 1525.13 L1776.91 1525.25 L1777.21 1525.39 L1777.50 1525.55 L1777.78 1525.72 L1778.05 1525.91 L1778.31 1526.12 L1778.56 1526.34 L1778.79 1526.58 L1779.02 1526.84 L1779.22 1527.10 L1779.42 1527.38 L1779.60 1527.67 L1779.77 1527.98 L1779.92 1528.29 L1780.06 1528.61 L1780.19 1528.93 L1780.30 1529.26 L1780.40 1529.60 L1780.49 1529.94 L1780.57 1530.28 L1780.64 1530.62 L1780.70 1530.96 L1780.75 1531.30 L1780.79 1531.64 L1780.83 1531.98 L1780.86 1532.31 L1780.89 1532.63 L1780.92 1532.95 L1780.95 1533.26 L1780.99 1533.57 L1781.03 1533.86 L1781.08 1534.14 L1781.16 1534.40 L1781.35 1534.60 L1781.56 1534.79 L1781.80 1534.97 L1782.04 1535.15 L1782.29 1535.33 L1782.56 1535.52 L1782.82 1535.71 L1783.09 1535.90 L1783.36 1536.10 L1783.64 1536.31 L1783.91 1536.52 L1784.17 1536.74 L1784.44 1536.97 L1784.69 1537.21 L1784.94 1537.46 L1785.18 1537.72 L1785.41 1537.98 L1785.63 1538.25 L1785.84 1538.53 L1786.03 1538.82 L1786.21 1539.12 L1786.37 1539.42 L1786.51 1539.73 L1786.64 1540.04 L1786.75 1540.36 L1786.84 1540.68 L1786.91 1541.01 L1786.96 1541.34 L1786.99 1541.67 Z" fill="none" stroke="#c8c9cc" stroke-width="2.2" />
<circle cx="1768" cy="1542" r="5.5" fill="none" stroke="#c8c9cc" stroke-width="2.2"/>
<text x="1802.00" y="1556.00" font-size="33.84" fill="#e4e6ea" textLength="217.49" lengthAdjust="spacingAndGlyphs" stroke="#15181c" stroke-width="0.74" >Schedulazione</text>
<path d="M3368.5 1530.5 L3393.5 1555.5 M3393.5 1530.5 L3368.5 1555.5" fill="none" stroke="#d0d1d4" stroke-width="2" />
<text x="1928.40" y="1618.20" font-size="25.38" fill="#e4e6ea" textLength="14.12" lengthAdjust="spacingAndGlyphs" >0</text>
<text x="1981.94" y="1618.20" font-size="25.38" fill="#e4e6ea" textLength="14.12" lengthAdjust="spacingAndGlyphs" >1</text>
<text x="2041.94" y="1618.20" font-size="25.38" fill="#e4e6ea" textLength="14.12" lengthAdjust="spacingAndGlyphs" >2</text>
<text x="2101.94" y="1618.20" font-size="25.38" fill="#e4e6ea" textLength="14.12" lengthAdjust="spacingAndGlyphs" >3</text>
<text x="2161.94" y="1618.20" font-size="25.38" fill="#e4e6ea" textLength="14.12" lengthAdjust="spacingAndGlyphs" >4</text>
<text x="2221.94" y="1618.20" font-size="25.38" fill="#e4e6ea" textLength="14.12" lengthAdjust="spacingAndGlyphs" >5</text>
<text x="2281.94" y="1618.20" font-size="25.38" fill="#e4e6ea" textLength="14.12" lengthAdjust="spacingAndGlyphs" >6</text>
<text x="2341.94" y="1618.20" font-size="25.38" fill="#e4e6ea" textLength="14.12" lengthAdjust="spacingAndGlyphs" >7</text>
<text x="2401.94" y="1618.20" font-size="25.38" fill="#e4e6ea" textLength="14.12" lengthAdjust="spacingAndGlyphs" >8</text>
<text x="2461.94" y="1618.20" font-size="25.38" fill="#e4e6ea" textLength="14.12" lengthAdjust="spacingAndGlyphs" >9</text>
<text x="2514.89" y="1618.20" font-size="25.38" fill="#e4e6ea" textLength="28.23" lengthAdjust="spacingAndGlyphs" >10</text>
<text x="2575.83" y="1618.20" font-size="25.38" fill="#e4e6ea" textLength="26.35" lengthAdjust="spacingAndGlyphs" >11</text>
<text x="2634.89" y="1618.20" font-size="25.38" fill="#e4e6ea" textLength="28.23" lengthAdjust="spacingAndGlyphs" >12</text>
<text x="2694.89" y="1618.20" font-size="25.38" fill="#e4e6ea" textLength="28.23" lengthAdjust="spacingAndGlyphs" >13</text>
<text x="2754.89" y="1618.20" font-size="25.38" fill="#e4e6ea" textLength="28.23" lengthAdjust="spacingAndGlyphs" >14</text>
<text x="2814.89" y="1618.20" font-size="25.38" fill="#e4e6ea" textLength="28.23" lengthAdjust="spacingAndGlyphs" >15</text>
<text x="2874.89" y="1618.20" font-size="25.38" fill="#e4e6ea" textLength="28.23" lengthAdjust="spacingAndGlyphs" >16</text>
<text x="2934.89" y="1618.20" font-size="25.38" fill="#e4e6ea" textLength="28.23" lengthAdjust="spacingAndGlyphs" >17</text>
<text x="2994.89" y="1618.20" font-size="25.38" fill="#e4e6ea" textLength="28.23" lengthAdjust="spacingAndGlyphs" >18</text>
<text x="3054.89" y="1618.20" font-size="25.38" fill="#e4e6ea" textLength="28.23" lengthAdjust="spacingAndGlyphs" >19</text>
<text x="3114.89" y="1618.20" font-size="25.38" fill="#e4e6ea" textLength="28.23" lengthAdjust="spacingAndGlyphs" >20</text>
<text x="3174.89" y="1618.20" font-size="25.38" fill="#e4e6ea" textLength="28.23" lengthAdjust="spacingAndGlyphs" >21</text>
<text x="3234.89" y="1618.20" font-size="25.38" fill="#e4e6ea" textLength="28.23" lengthAdjust="spacingAndGlyphs" >22</text>
<text x="3294.89" y="1618.20" font-size="25.38" fill="#e4e6ea" textLength="28.23" lengthAdjust="spacingAndGlyphs" >23</text>
<text x="3351.00" y="1618.20" font-size="25.38" fill="#e4e6ea" textLength="28.23" lengthAdjust="spacingAndGlyphs" >24</text>
<rect x="1929.00" y="1647.00" width="1439.30" height="335.00" fill="#3a7ccb" />
<rect x="1929.00" y="1694.00" width="1439.30" height="2.00" fill="#2c3a4e" />
<rect x="1929.00" y="1742.00" width="1439.30" height="2.00" fill="#2c3a4e" />
<rect x="1929.00" y="1790.00" width="1439.30" height="2.00" fill="#2c3a4e" />
<rect x="1929.00" y="1838.00" width="1439.30" height="2.00" fill="#2c3a4e" />
<rect x="1929.00" y="1886.00" width="1439.30" height="2.00" fill="#2c3a4e" />
<rect x="1929.00" y="1934.00" width="1439.30" height="2.00" fill="#2c3a4e" />
<rect x="1958.00" y="1647.00" width="2.00" height="335.00" fill="#2c3a4e" />
<rect x="1988.00" y="1647.00" width="2.00" height="335.00" fill="#2c3a4e" />
<rect x="2018.00" y="1647.00" width="2.00" height="335.00" fill="#2c3a4e" />
<rect x="2048.00" y="1647.00" width="2.00" height="335.00" fill="#03040a" />
<rect x="2078.00" y="1647.00" width="2.00" height="335.00" fill="#2c3a4e" />
<rect x="2108.00" y="1647.00" width="2.00" height="335.00" fill="#2c3a4e" />
<rect x="2138.00" y="1647.00" width="2.00" height="335.00" fill="#2c3a4e" />
<rect x="2168.00" y="1647.00" width="2.00" height="335.00" fill="#03040a" />
<rect x="2198.00" y="1647.00" width="2.00" height="335.00" fill="#2c3a4e" />
<rect x="2228.00" y="1647.00" width="2.00" height="335.00" fill="#2c3a4e" />
<rect x="2258.00" y="1647.00" width="2.00" height="335.00" fill="#2c3a4e" />
<rect x="2288.00" y="1647.00" width="2.00" height="335.00" fill="#03040a" />
<rect x="2318.00" y="1647.00" width="2.00" height="335.00" fill="#2c3a4e" />
<rect x="2348.00" y="1647.00" width="2.00" height="335.00" fill="#2c3a4e" />
<rect x="2378.00" y="1647.00" width="2.00" height="335.00" fill="#2c3a4e" />
<rect x="2408.00" y="1647.00" width="2.00" height="335.00" fill="#03040a" />
<rect x="2438.00" y="1647.00" width="2.00" height="335.00" fill="#2c3a4e" />
<rect x="2468.00" y="1647.00" width="2.00" height="335.00" fill="#2c3a4e" />
<rect x="2498.00" y="1647.00" width="2.00" height="335.00" fill="#2c3a4e" />
<rect x="2528.00" y="1647.00" width="2.00" height="335.00" fill="#03040a" />
<rect x="2558.00" y="1647.00" width="2.00" height="335.00" fill="#2c3a4e" />
<rect x="2588.00" y="1647.00" width="2.00" height="335.00" fill="#2c3a4e" />
<rect x="2618.00" y="1647.00" width="2.00" height="335.00" fill="#2c3a4e" />
<rect x="2648.00" y="1647.00" width="2.00" height="335.00" fill="#03040a" />
<rect x="2678.00" y="1647.00" width="2.00" height="335.00" fill="#2c3a4e" />
<rect x="2708.00" y="1647.00" width="2.00" height="335.00" fill="#2c3a4e" />
<rect x="2738.00" y="1647.00" width="2.00" height="335.00" fill="#2c3a4e" />
<rect x="2768.00" y="1647.00" width="2.00" height="335.00" fill="#03040a" />
<rect x="2798.00" y="1647.00" width="2.00" height="335.00" fill="#2c3a4e" />
<rect x="2828.00" y="1647.00" width="2.00" height="335.00" fill="#2c3a4e" />
<rect x="2858.00" y="1647.00" width="2.00" height="335.00" fill="#2c3a4e" />
<rect x="2888.00" y="1647.00" width="2.00" height="335.00" fill="#03040a" />
<rect x="2918.00" y="1647.00" width="2.00" height="335.00" fill="#2c3a4e" />
<rect x="2948.00" y="1647.00" width="2.00" height="335.00" fill="#2c3a4e" />
<rect x="2978.00" y="1647.00" width="2.00" height="335.00" fill="#2c3a4e" />
<rect x="3008.00" y="1647.00" width="2.00" height="335.00" fill="#03040a" />
<rect x="3038.00" y="1647.00" width="2.00" height="335.00" fill="#2c3a4e" />
<rect x="3068.00" y="1647.00" width="2.00" height="335.00" fill="#2c3a4e" />
<rect x="3098.00" y="1647.00" width="2.00" height="335.00" fill="#2c3a4e" />
<rect x="3128.00" y="1647.00" width="2.00" height="335.00" fill="#03040a" />
<rect x="3158.00" y="1647.00" width="2.00" height="335.00" fill="#2c3a4e" />
<rect x="3188.00" y="1647.00" width="2.00" height="335.00" fill="#2c3a4e" />
<rect x="3218.00" y="1647.00" width="2.00" height="335.00" fill="#2c3a4e" />
<rect x="3248.00" y="1647.00" width="2.00" height="335.00" fill="#03040a" />
<rect x="3278.00" y="1647.00" width="2.00" height="335.00" fill="#2c3a4e" />
<rect x="3308.00" y="1647.00" width="2.00" height="335.00" fill="#2c3a4e" />
<rect x="3338.00" y="1647.00" width="2.00" height="335.00" fill="#2c3a4e" />
<rect x="1928.00" y="1646.20" width="1440.30" height="1.80" fill="#3a3e47" />
<rect x="1928.00" y="1646.20" width="2.00" height="335.80" fill="#3a3e47" />
<rect x="3370.50" y="1647.00" width="2.00" height="335.00" fill="#2e2f33" />
<text x="1767.00" y="1683.40" font-size="30.46" fill="#e4e6ea" textLength="53.19" lengthAdjust="spacingAndGlyphs" stroke="#15181c" stroke-width="0.67" >LUN</text>
<text x="1767.00" y="1730.00" font-size="30.46" fill="#e4e6ea" textLength="64.31" lengthAdjust="spacingAndGlyphs" stroke="#15181c" stroke-width="0.67" >MAR</text>
<text x="1767.00" y="1777.70" font-size="30.46" fill="#e4e6ea" textLength="61.21" lengthAdjust="spacingAndGlyphs" stroke="#15181c" stroke-width="0.67" >MER</text>
<text x="1767.00" y="1826.00" font-size="30.46" fill="#e4e6ea" textLength="48.41" lengthAdjust="spacingAndGlyphs" stroke="#15181c" stroke-width="0.67" >GIO</text>
<text x="1767.00" y="1873.80" font-size="30.46" fill="#e4e6ea" textLength="54.20" lengthAdjust="spacingAndGlyphs" stroke="#15181c" stroke-width="0.67" >VEN</text>
<text x="1767.00" y="1919.60" font-size="30.46" fill="#e4e6ea" textLength="51.90" lengthAdjust="spacingAndGlyphs" stroke="#15181c" stroke-width="0.67" >SAB</text>
<text x="1767.00" y="1968.00" font-size="30.46" fill="#e4e6ea" textLength="69.30" lengthAdjust="spacingAndGlyphs" stroke="#15181c" stroke-width="0.67" >DOM</text>
<path d="M1882.40 1604.60 L1889.40 1597.10 L1891.70 1599.40 L1888.60 1602.90 L1900.10 1602.90 L1900.10 1606.20 L1883.60 1606.20 Z" fill="#c4c5c8"  />
<path d="M1900.10 1611.00 L1893.10 1618.50 L1890.80 1616.20 L1893.90 1612.70 L1882.40 1612.70 L1882.40 1609.40 L1898.90 1609.40 Z" fill="#c4c5c8"  />
<path d="M1882.40 1656.60 L1889.40 1649.10 L1891.70 1651.40 L1888.60 1654.90 L1900.10 1654.90 L1900.10 1658.20 L1883.60 1658.20 Z" fill="#c4c5c8"  />
<path d="M1900.10 1663.00 L1893.10 1670.50 L1890.80 1668.20 L1893.90 1664.70 L1882.40 1664.70 L1882.40 1661.40 L1898.90 1661.40 Z" fill="#c4c5c8"  />
<path d="M1882.40 1708.20 L1889.40 1700.70 L1891.70 1703.00 L1888.60 1706.50 L1900.10 1706.50 L1900.10 1709.80 L1883.60 1709.80 Z" fill="#c4c5c8"  />
<path d="M1900.10 1714.60 L1893.10 1722.10 L1890.80 1719.80 L1893.90 1716.30 L1882.40 1716.30 L1882.40 1713.00 L1898.90 1713.00 Z" fill="#c4c5c8"  />
<path d="M1882.40 1760.40 L1889.40 1752.90 L1891.70 1755.20 L1888.60 1758.70 L1900.10 1758.70 L1900.10 1762.00 L1883.60 1762.00 Z" fill="#c4c5c8"  />
<path d="M1900.10 1766.80 L1893.10 1774.30 L1890.80 1772.00 L1893.90 1768.50 L1882.40 1768.50 L1882.40 1765.20 L1898.90 1765.20 Z" fill="#c4c5c8"  />
<path d="M1882.40 1812.30 L1889.40 1804.80 L1891.70 1807.10 L1888.60 1810.60 L1900.10 1810.60 L1900.10 1813.90 L1883.60 1813.90 Z" fill="#c4c5c8"  />
<path d="M1900.10 1818.70 L1893.10 1826.20 L1890.80 1823.90 L1893.90 1820.40 L1882.40 1820.40 L1882.40 1817.10 L1898.90 1817.10 Z" fill="#c4c5c8"  />
<path d="M1882.40 1863.90 L1889.40 1856.40 L1891.70 1858.70 L1888.60 1862.20 L1900.10 1862.20 L1900.10 1865.50 L1883.60 1865.50 Z" fill="#c4c5c8"  />
<path d="M1900.10 1870.30 L1893.10 1877.80 L1890.80 1875.50 L1893.90 1872.00 L1882.40 1872.00 L1882.40 1868.70 L1898.90 1868.70 Z" fill="#c4c5c8"  />
<path d="M1882.40 1915.60 L1889.40 1908.10 L1891.70 1910.40 L1888.60 1913.90 L1900.10 1913.90 L1900.10 1917.20 L1883.60 1917.20 Z" fill="#c4c5c8"  />
<path d="M1900.10 1922.00 L1893.10 1929.50 L1890.80 1927.20 L1893.90 1923.70 L1882.40 1923.70 L1882.40 1920.40 L1898.90 1920.40 Z" fill="#c4c5c8"  />
<path d="M1882.40 1968.20 L1889.40 1960.70 L1891.70 1963.00 L1888.60 1966.50 L1900.10 1966.50 L1900.10 1969.80 L1883.60 1969.80 Z" fill="#c4c5c8"  />
<path d="M1900.10 1974.60 L1893.10 1982.10 L1890.80 1979.80 L1893.90 1976.30 L1882.40 1976.30 L1882.40 1973.00 L1898.90 1973.00 Z" fill="#c4c5c8"  />
<rect x="3220.00" y="2008.00" width="160.00" height="60.00" fill="#2a2c35" />
<text x="3248.40" y="2047.80" font-size="30.31" fill="#e4e6ea" textLength="100.16" lengthAdjust="spacingAndGlyphs" stroke="#2a2c35" stroke-width="0.67" >Applica</text>
</svg>
</body></html>
